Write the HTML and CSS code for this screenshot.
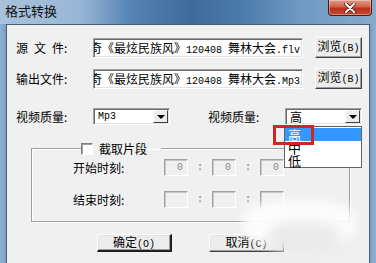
FILE: index.html
```html
<!DOCTYPE html>
<html>
<head>
    <title>格式转换</title>
    <link rel="stylesheet" href="styles.css">
</head>
<body>
    <div class="window">
        <div class="titlebar">
            <span class="title">格式转换</span>
            <div class="close">
                <svg width="14" height="10" viewBox="0 0 14 10"><path d="M3 1 L11 9 M11 1 L3 9" stroke="#3a1a14" stroke-width="3.4" stroke-linecap="round"/><path d="M3 1 L11 9 M11 1 L3 9" stroke="#fff" stroke-width="2" stroke-linecap="round"/></svg>
            </div>
        </div>

        <div class="client">
            <div class="row">
                <span class="lbl">源&ensp;文&ensp;件:</span>
                <div class="field path"><span class="path-text">凤凰传奇《最炫民族风》<span class="lat">120408 </span>舞林大会<span class="lat">.flv</span></span></div>
                <button class="btn browse">浏览<span class="lat">(B)</span></button>
            </div>
            <div class="row row2">
                <span class="lbl">输出文件:</span>
                <div class="field path"><span class="path-text">凤凰传奇《最炫民族风》<span class="lat">120408 </span>舞林大会<span class="lat">.Mp3</span></span></div>
                <button class="btn browse">浏览<span class="lat">(B)</span></button>
            </div>
            <div class="row row3">
                <span class="lbl">视频质量:</span>
                <div class="field select"><span class="lat sel-val">Mp3</span><span class="arrow"></span></div>
                <span class="lbl lbl2">视频质量:</span>
                <div class="field select">
                    <span class="sel-val">高</span><span class="arrow"></span>
                    <div class="droplist">
                        <div class="opt active">高</div>
                        <div class="opt">中</div>
                        <div class="opt">低</div>
                    </div>
                    <div class="mark"></div>
                </div>
            </div>

            <fieldset class="group">
                <legend><span class="check"></span>截取片段</legend>
                <div class="time-row">
                    <span class="tlbl">开始时刻:</span>
                    <span class="tbox">0</span><span class="sep">:</span>
                    <span class="tbox">0</span><span class="sep">:</span>
                    <span class="tbox">0</span>
                </div>
                <div class="time-row row-end">
                    <span class="tlbl">结束时刻:</span>
                    <span class="tbox"></span><span class="sep">:</span>
                    <span class="tbox"></span><span class="sep">:</span>
                    <span class="tbox"></span>
                </div>
            </fieldset>

            <div class="actions">
                <button class="btn big default">确定<span class="lat">(O)</span></button>
                <button class="btn big">取消<span class="lat">(C)</span></button>
            </div>

            <div class="smudge"></div>
            <div class="smudge small"></div>
        </div>
    </div>
</body>
</html>
```

FILE: styles.css
```css
* { margin: 0; padding: 0; box-sizing: border-box; }
body { width: 376px; height: 263px; overflow: hidden; font-family: "Noto Sans CJK SC", "DejaVu Sans", sans-serif; font-size: 12px; color: #000; }
.lat { font-family: "Liberation Mono", "DejaVu Sans Mono", monospace; font-size: 10px; }

.window { height: 263px; background: linear-gradient(90deg, #8fb0d2 0, #7aa0c8 6px, #7aa0c8 370px, #8fb0d2 376px); }
.titlebar { height: 24px; display: flex; align-items: flex-start; justify-content: space-between; background: linear-gradient(90deg, #a8c2dc 0, #98b6d5 80px, #5584b4 130px, #3d6b9c 190px, #4a7aab 240px, #6f99c3 300px, #88aacd 376px); }
.title { font-size: 13px; line-height: 14px; margin: 4px 0 0 5px; color: #111; }
.close { width: 44px; height: 16px; margin-right: 4px; border: 1px solid #4a1c14; border-top: none; border-radius: 0 0 4px 4px; background: linear-gradient(#e59a8c 0, #d0604c 45%, #b8321e 55%, #c24a33 100%); display: flex; align-items: center; justify-content: center; box-shadow: inset 0 0 0 1px rgba(255,255,255,0.35); }

.client { position: relative; height: 239px; margin: 0 6px; background: #f0f0f0; border: 1px solid #485c74; border-bottom: none; padding: 12px 0 0 9px; }

.row { display: flex; align-items: center; height: 21px; }
.row2 { margin-top: 10px; }
.row3 { margin-top: 19px; height: 17px; }
.lbl { width: 77px; white-space: nowrap; }
.lbl2 { margin-left: 38px; }

.field { background: #fff; border-top: 1px solid #a0a0a0; border-left: 1px solid #a0a0a0; border-bottom: 1px solid #fff; border-right: 1px solid #fff; box-shadow: inset 1px 1px 0 #696969, inset -1px -1px 0 #e3e3e3; }
.path { width: 210px; height: 20px; display: flex; justify-content: flex-end; align-items: center; overflow: hidden; padding: 0 2px; }
.path-text { white-space: nowrap; }

.btn { font-family: "Noto Sans CJK SC", sans-serif; font-size: 12px; background: #ececec; border-top: 1px solid #fff; border-left: 1px solid #fff; border-bottom: 1px solid #404040; border-right: 1px solid #404040; box-shadow: inset -1px -1px 0 #a0a0a0, inset 1px 1px 0 #e3e3e3; color: #000; line-height: 14px; }
.browse { width: 47px; height: 21px; margin-left: 12px; }

.select { position: relative; width: 77px; height: 17px; display: flex; align-items: center; padding-left: 4px; }
.sel-val { flex: 1; line-height: 13px; }
.arrow { width: 15px; height: 13px; margin-right: 1px; background: #ececec; border-top: 1px solid #fff; border-left: 1px solid #fff; border-bottom: 1px solid #404040; border-right: 1px solid #404040; display: flex; align-items: center; justify-content: center; }
.arrow::after { content: ""; border-left: 4px solid transparent; border-right: 4px solid transparent; border-top: 4px solid #000; }

.droplist { position: absolute; top: 17px; left: -2px; width: 78px; height: 42px; background: #fff; border: 1px solid #646464; padding-top: 1px; z-index: 2; }
.opt { height: 13px; line-height: 13px; padding-left: 3px; font-size: 13px; }
.opt.active { background: #3399ff; color: #fff; }
.mark { position: absolute; top: 16px; left: -13px; width: 41px; height: 20px; border: 3px solid #cf2525; z-index: 3; }

.group { width: 319px; height: 80px; margin: 17px 0 0 15px; border: 1px solid #a0a0a0; box-shadow: inset 1px 1px 0 #fff, 1px 1px 0 #fff; padding: 0 0 0 41px; }
.group legend { display: flex; align-items: center; margin-left: 8px; padding-right: 14px; height: 13px; font-size: 12px; }
.check { width: 12px; height: 12px; margin-right: 6px; background: #fff; border-top: 1px solid #808080; border-left: 1px solid #808080; border-bottom: 1px solid #fff; border-right: 1px solid #fff; box-shadow: inset 1px 1px 0 #a0a0a0; }

.time-row { display: flex; align-items: center; height: 17px; margin-top: 4px; }
.row-end { margin-top: 15px; }
.tlbl { width: 91px; }
.tbox { width: 24px; height: 17px; border-top: 1px solid #a0a0a0; border-left: 1px solid #a0a0a0; border-bottom: 1px solid #fff; border-right: 1px solid #fff; box-shadow: inset 1px 1px 0 #c8c8c8; text-align: right; padding-right: 4px; color: #8c8c8c; font-family: "Liberation Mono", monospace; font-size: 10px; line-height: 15px; }
.sep { width: 24px; text-align: center; color: #6d6d6d; font-family: "Liberation Mono", monospace; font-size: 10px; }

.actions { display: flex; gap: 37px; margin: 12px 0 0 81px; }
.big { width: 75px; height: 18px; }
.default { border-bottom: 2px solid #202020; border-right: 2px solid #202020; }

.smudge { position: absolute; left: 236px; top: 176px; width: 112px; height: 44px; background: rgba(252,252,252,0.95); filter: blur(5px); border-radius: 35%; }
.smudge.small { left: 262px; top: 198px; width: 70px; height: 30px; background: rgba(232,232,232,0.9); filter: blur(6px); }
```
